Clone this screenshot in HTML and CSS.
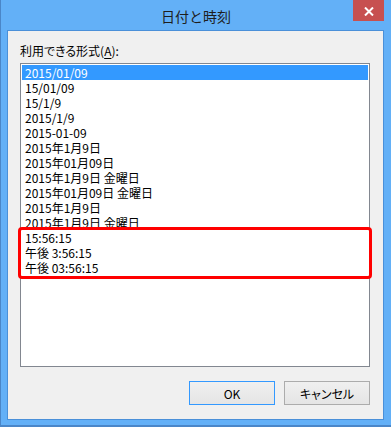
FILE: index.html
```html
<!DOCTYPE html>
<html lang="ja">
<head>
<meta charset="utf-8">
<title>日付と時刻</title>
<link rel="stylesheet" href="styles.css">
</head>
<body>
<div class="window">
  <div class="titlebar">
    <div class="title">日付と時刻</div>
    <div class="close">
      <svg width="10" height="9" viewBox="0 0 10 9"><path d="M1 0.5 L9 8.5 M9 0.5 L1 8.5" stroke="#fff" stroke-width="2" fill="none"/></svg>
    </div>
  </div>
  <div class="panel">
    <div class="label">利用できる形式(<u>A</u>):</div>
    <div class="listbox">
      <div class="row selected">2015/01/09</div>
      <div class="row">15/01/09</div>
      <div class="row">15/1/9</div>
      <div class="row">2015/1/9</div>
      <div class="row">2015-01-09</div>
      <div class="row">2015年1月9日</div>
      <div class="row">2015年01月09日</div>
      <div class="row">2015年1月9日 金曜日</div>
      <div class="row">2015年01月09日 金曜日</div>
      <div class="row">2015年1月9日</div>
      <div class="row">2015年1月9日 金曜日</div>
      <div class="marked">
        <div class="row">15:56:15</div>
        <div class="row">午後 3:56:15</div>
        <div class="row">午後 03:56:15</div>
      </div>
    </div>
    <div class="buttons">
      <div class="btn default">OK</div>
      <div class="btn">キャンセル</div>
    </div>
  </div>
</div>
</body>
</html>
```
FILE: styles.css
```css
html, body {
  margin: 0;
  padding: 0;
  background: #63b0f7;
}
body {
  width: 391px;
  height: 427px;
  overflow: hidden;
  font-family: "Noto Sans CJK JP", "Noto Sans", sans-serif;
  font-size: 12px;
  color: #000;
}
.window {
  box-sizing: border-box;
  width: 391px;
  height: 427px;
  background: #63b0f7;
  border-left: 1px solid #4a86c8;
  border-bottom: 2px solid #4a86c8;
  padding-bottom: 5px;
  display: flex;
  flex-direction: column;
}
.titlebar {
  height: 30px;
  display: grid;
  grid-template-columns: 1fr auto 1fr;
}
.title {
  grid-column: 2;
  font-size: 14px;
  line-height: 20px;
  padding-top: 6px;
  color: #1e1e1e;
}
.close {
  grid-column: 3;
  justify-self: end;
  align-self: start;
  width: 31px;
  height: 21px;
  margin-right: 7px;
  background: #c75050;
  display: flex;
  align-items: center;
  justify-content: center;
}
.close svg { display: block; margin-top: 1px; }
.panel {
  box-sizing: border-box;
  height: 390px;
  margin: 0 7px 0 6px;
  border: 1px solid #4a90d9;
  background: #f0f0f0;
  padding: 12px 13px 14px 12px;
  display: flex;
  flex-direction: column;
}
.label {
  height: 15px;
  line-height: 15px;
  margin-bottom: 5px;
  font-feature-settings: "palt";
  white-space: nowrap;
}
.label u { text-underline-offset: 2px; }
.listbox {
  box-sizing: border-box;
  height: 304px;
  border: 1px solid #828790;
  background: #fff;
  padding: 1px;
}
.row {
  height: 15px;
  line-height: 15px;
  padding-left: 3px;
  white-space: nowrap;
}
.row.selected {
  background: #3399ff;
  color: #fff;
}
.marked {
  margin: 0 -1px;
  padding-bottom: 1px;
  outline: 3px solid #ff0000;
  border-radius: 1px;
}
.marked .row { padding-left: 4px; }
.buttons {
  margin-top: 14px;
  display: flex;
  justify-content: flex-end;
  gap: 9px;
}
.btn {
  box-sizing: border-box;
  width: 86px;
  height: 24px;
  border: 1px solid #acacac;
  background: linear-gradient(#f0f0f0, #e5e5e5);
  display: flex;
  align-items: center;
  justify-content: center;
  font-feature-settings: "palt";
  color: #000;
}
.btn.default {
  border-color: #3399ff;
}
```
